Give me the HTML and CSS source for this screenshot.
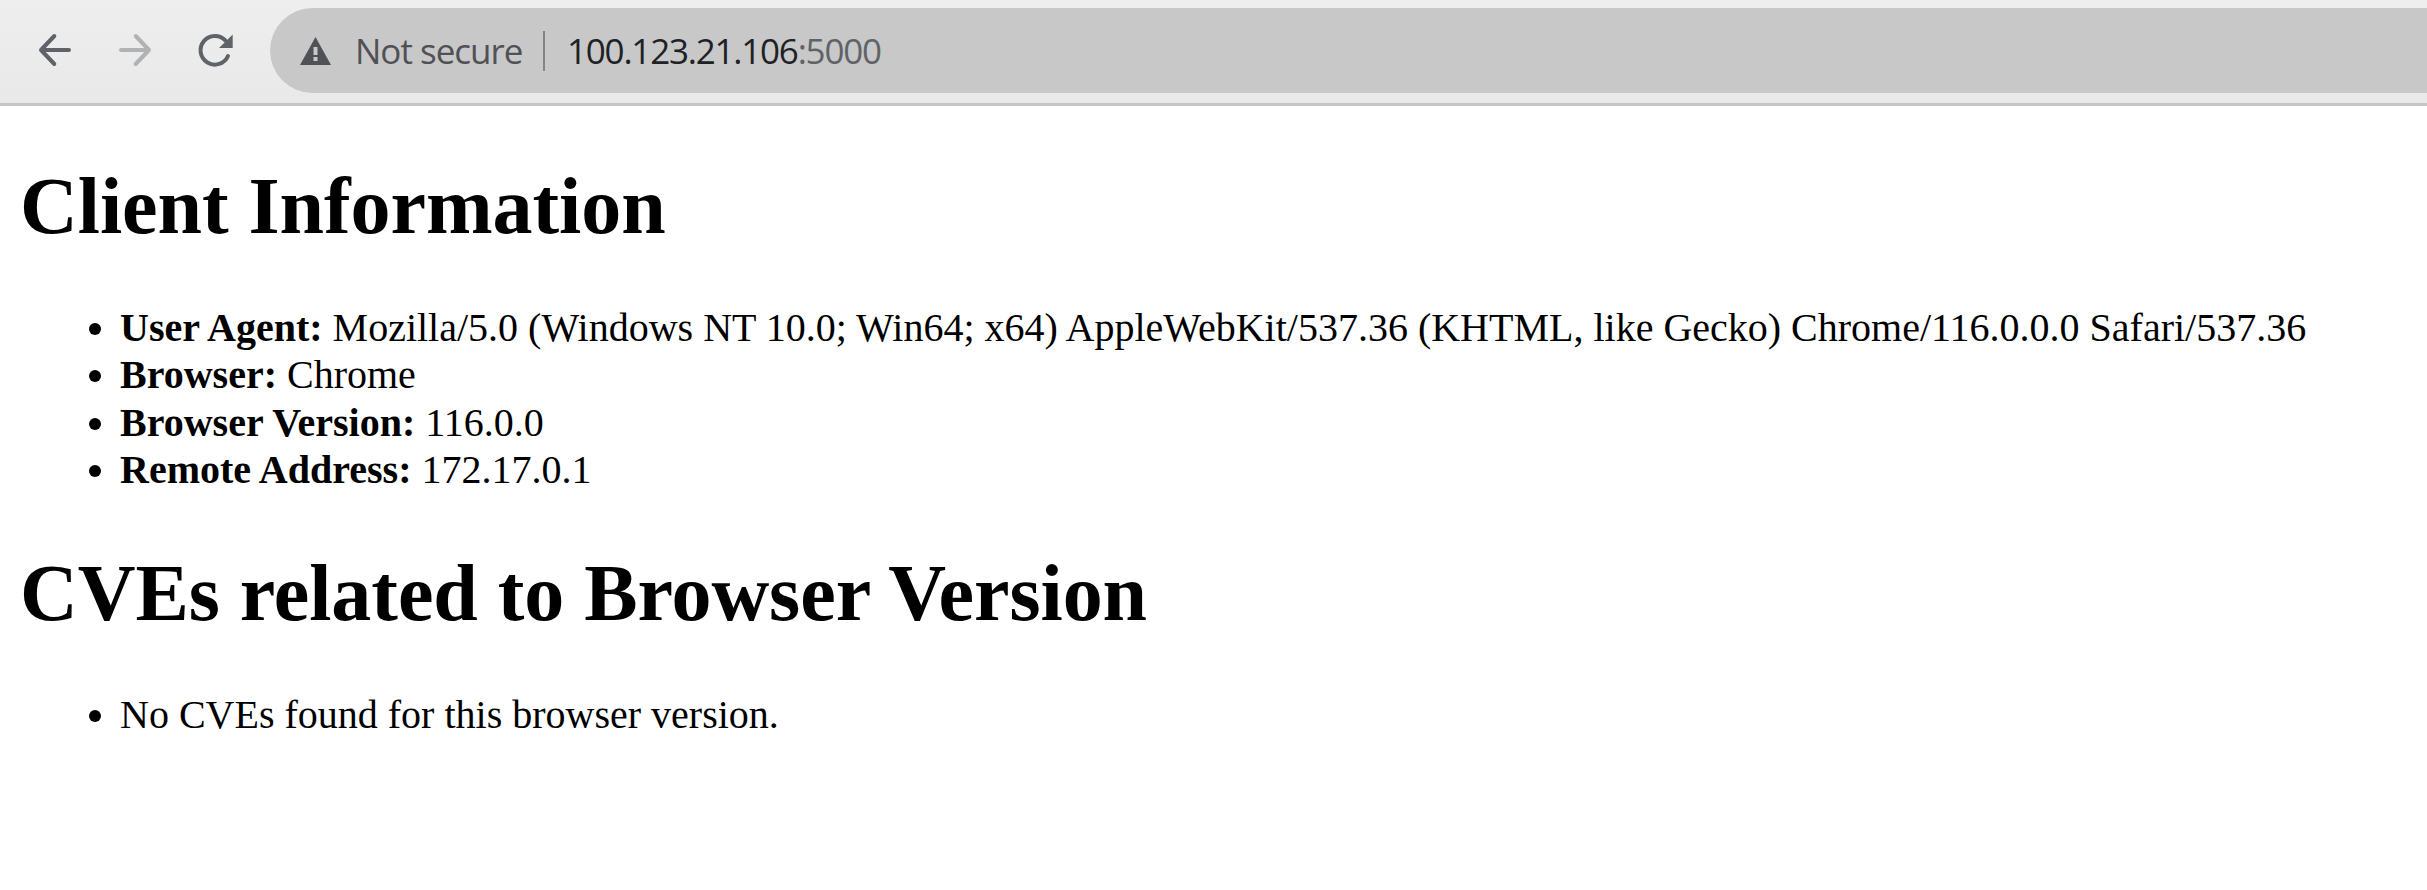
FILE: index.html
```html
<!DOCTYPE html>
<html lang="en">
<head>
<meta charset="utf-8">
<title>Client Information</title>
<link rel="stylesheet" href="styles.css">
</head>
<body>
<header class="toolbar">
  <nav class="nav">
    <svg class="icon" viewBox="0 0 40 40"><path d="M34 20H6M19.300 6 6 20l13.300 14"/></svg>
    <svg class="icon icon-disabled" viewBox="0 0 40 40"><path d="M6 20h28M20.700 6 34 20 20.700 34"/></svg>
    <svg class="icon" viewBox="0 0 40 40"><path d="M33 26A14.300 14.300 0 1 1 30.500 10.700"/><path class="solid" d="M37.700 4.500V18H24z"/></svg>
  </nav>
  <div class="omnibox">
    <svg class="warning" viewBox="0 0 31 28"><path d="M15.500 0 31 28H0z"/><path class="mark" d="M13.500 10h4v8h-4zM13.500 20h4v4h-4z"/></svg>
    <span class="status">Not secure</span>
    <span class="divider"></span>
    <span class="url">100.123.21.106<span class="port">:5000</span></span>
  </div>
</header>
<main class="page">
  <h1 class="title">Client Information</h1>
  <ul class="list">
    <li><strong>User Agent:</strong> Mozilla/5.0 (Windows NT 10.0; Win64; x64) AppleWebKit/537.36 (KHTML, like Gecko) Chrome/116.0.0.0 Safari/537.36</li>
    <li><strong>Browser:</strong> Chrome</li>
    <li><strong>Browser Version:</strong> 116.0.0</li>
    <li><strong>Remote Address:</strong> 172.17.0.1</li>
  </ul>
  <h1 class="title">CVEs related to Browser Version</h1>
  <ul class="list">
    <li>No CVEs found for this browser version.</li>
  </ul>
</main>
</body>
</html>
```
FILE: styles.css
```css
body {
  margin: 0;
  background: #fff;
  color: #000;
  font-family: "Liberation Serif", "Times New Roman", serif;
  font-size: 40px;
}

.toolbar {
  box-sizing: border-box;
  display: flex;
  height: 106px;
  padding: 8px 0 10px 35px;
  border-bottom: 3px solid #c5c5c5;
  background: linear-gradient(#eeeeee, #e9e9e9);
  font-family: "Open Sans", "Noto Sans", sans-serif;
  font-size: 35px;
}

.nav {
  display: flex;
  align-items: center;
  gap: 40px;
  width: 235px;
  height: 84px;
}

.icon {
  width: 40px;
  height: 40px;
  fill: none;
  stroke: #5f6368;
  stroke-width: 4;
  stroke-linecap: round;
  stroke-linejoin: round;
}

.icon-disabled {
  stroke: #b0b2b4;
}

.solid {
  fill: #5f6368;
  stroke: none;
}

.omnibox {
  box-sizing: border-box;
  display: flex;
  flex: 1;
  align-items: center;
  height: 85px;
  padding-left: 30px;
  border-radius: 43px 0 0 43px;
  background: #c8c8c8;
  white-space: nowrap;
}

.warning {
  width: 31px;
  height: 28px;
  fill: #505156;
}

.mark {
  fill: #c8c8c8;
}

.status {
  width: 188px;
  margin-left: 24px;
  color: #505156;
  letter-spacing: -1px;
}

.divider {
  width: 2px;
  height: 40px;
  background: #858585;
}

.url {
  margin-left: 22px;
  color: #202124;
  letter-spacing: -1.22px;
}

.port {
  color: #5f6368;
}

.page {
  display: flow-root;
  padding: 0 20px;
}

.title {
  margin: 53.6px 0 52.4px;
  font-size: 80px;
  line-height: 92px;
  letter-spacing: -0.06px;
}

.list {
  margin: 52.4px 0 53.6px;
  padding-left: 100px;
  line-height: 47.3px;
}
```
